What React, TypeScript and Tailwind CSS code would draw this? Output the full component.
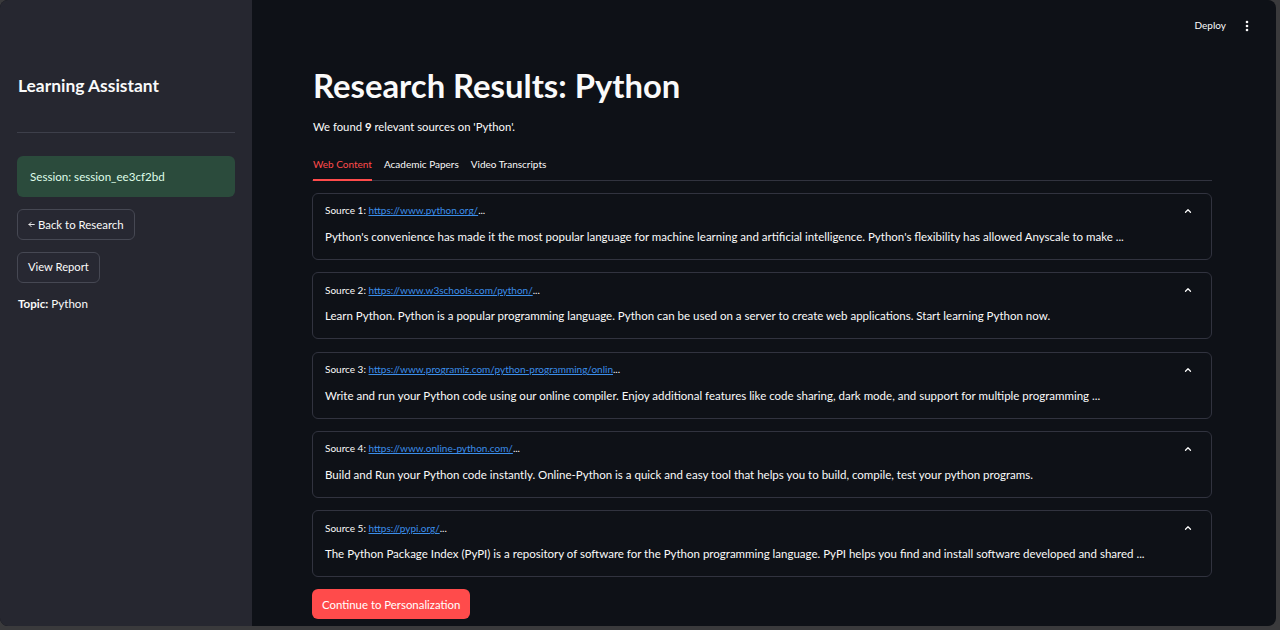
import React from "react";

const sources = [
  {
    n: 1,
    url: "https://www.python.org/",
    text: "Python's convenience has made it the most popular language for machine learning and artificial intelligence. Python's flexibility has allowed Anyscale to make ...",
  },
  {
    n: 2,
    url: "https://www.w3schools.com/python/",
    text: "Learn Python. Python is a popular programming language. Python can be used on a server to create web applications. Start learning Python now.",
  },
  {
    n: 3,
    url: "https://www.programiz.com/python-programming/onlin",
    text: "Write and run your Python code using our online compiler. Enjoy additional features like code sharing, dark mode, and support for multiple programming ...",
  },
  {
    n: 4,
    url: "https://www.online-python.com/",
    text: "Build and Run your Python code instantly. Online-Python is a quick and easy tool that helps you to build, compile, test your python programs.",
  },
  {
    n: 5,
    url: "https://pypi.org/",
    text: "The Python Package Index (PyPI) is a repository of software for the Python programming language. PyPI helps you find and install software developed and shared ...",
  },
];

function ChevronUp() {
  return (
    <svg width="10" height="10" viewBox="0 0 24 24" fill="none" stroke="#fafafa" strokeWidth="3" strokeLinecap="round" strokeLinejoin="round">
      <path d="M6 15l6-6 6 6" />
    </svg>
  );
}

function ArrowLeft() {
  return (
    <svg width="7" height="7" viewBox="0 0 10 10" fill="none" stroke="#fafafa" strokeWidth="1.3" strokeLinecap="round" strokeLinejoin="round" className="mr-[3px]">
      <path d="M9 5H1.5M4.5 2L1.5 5l3 3" />
    </svg>
  );
}

export default function App() {
  return (
    <div
      className="w-[1280px] h-[630px] bg-[#3a3a3c] overflow-hidden"
      style={{ fontFamily: 'Lato, "Noto Sans", sans-serif' }}
    >
      <div className="w-[1276px] h-[626px] rounded-lg overflow-hidden flex bg-[#0e1117] text-[#fafafa]">
        {/* Sidebar */}
        <aside className="w-[252px] shrink-0 bg-[#262730] px-[17px] pt-[74px] flex flex-col">
          <h2 className="text-[17.4px] font-bold leading-6 pl-px">Learning Assistant</h2>
          <div className="h-px bg-[#3d3f4a] mt-[34px] mb-[23px]" />
          <div className="h-[41px] rounded-md bg-[#2b4b3c] text-[#dffde9] text-[11.6px] flex items-center px-[13px]">
            Session: session_ee3cf2bd
          </div>
          <div className="mt-[12px] flex flex-col items-start gap-[12px]">
            <button className="h-[31px] px-[10px] rounded-md border border-[#464853] bg-[#272832] text-[11.4px] text-[#fafafa] flex items-center">
              <ArrowLeft />
              Back to Research
            </button>
            <button className="h-[31px] px-[10px] rounded-md border border-[#464853] bg-[#272832] text-[11.2px] text-[#fafafa]">
              View Report
            </button>
          </div>
          <p className="mt-[12px] text-[11.6px] pl-px">
            <span className="font-bold">Topic:</span> Python
          </p>
        </aside>

        {/* Main */}
        <main className="flex-1 relative">
          <div className="absolute top-[18px] right-[27px] flex items-center gap-[19px] text-[10px]">
            <span>Deploy</span>
            <svg width="4" height="12" viewBox="0 0 4 12" fill="#fafafa">
              <circle cx="2" cy="2" r="1.3" />
              <circle cx="2" cy="6" r="1.3" />
              <circle cx="2" cy="10" r="1.3" />
            </svg>
          </div>

          <div className="ml-[60px] w-[900px] pt-[66px]">
            <h1 className="text-[32.8px] font-bold leading-[40px] pl-px">Research Results: Python</h1>
            <p className="mt-[13px] text-[11.3px] pl-px">
              We found <span className="font-bold">9</span> relevant sources on 'Python'.
            </p>

            <div className="mt-[21px] flex gap-[12px] border-b border-[#31333f] text-[10px] pl-px">
              <div className="text-[#ff4b4b] pb-[7px] border-b-2 border-[#ff4b4b] -mb-px">Web Content</div>
              <div className="pb-[8px]">Academic Papers</div>
              <div className="pb-[8px]">Video Transcripts</div>
            </div>

            <div className="mt-[12px] flex flex-col gap-[12.3px]">
              {sources.map((s) => (
                <div key={s.n} className="h-[67px] rounded-md border border-[#31333f] px-[12px] pt-[9px]">
                  <div className="flex items-center justify-between h-[16px]">
                    <div className="text-[10px]">
                      Source {s.n}:{" "}
                      <span className="text-[#3b8eea] underline">{s.url}</span>...
                    </div>
                    <div className="mr-[6px]">
                      <ChevronUp />
                    </div>
                  </div>
                  <p className="mt-[10px] text-[11.5px] leading-[16px] whitespace-nowrap">{s.text}</p>
                </div>
              ))}
            </div>

            <button className="mt-[12px] h-[30px] px-[10px] rounded-md bg-[#ff4b4b] text-white text-[11.4px]">
              Continue to Personalization
            </button>
          </div>
        </main>
      </div>
    </div>
  );
}
